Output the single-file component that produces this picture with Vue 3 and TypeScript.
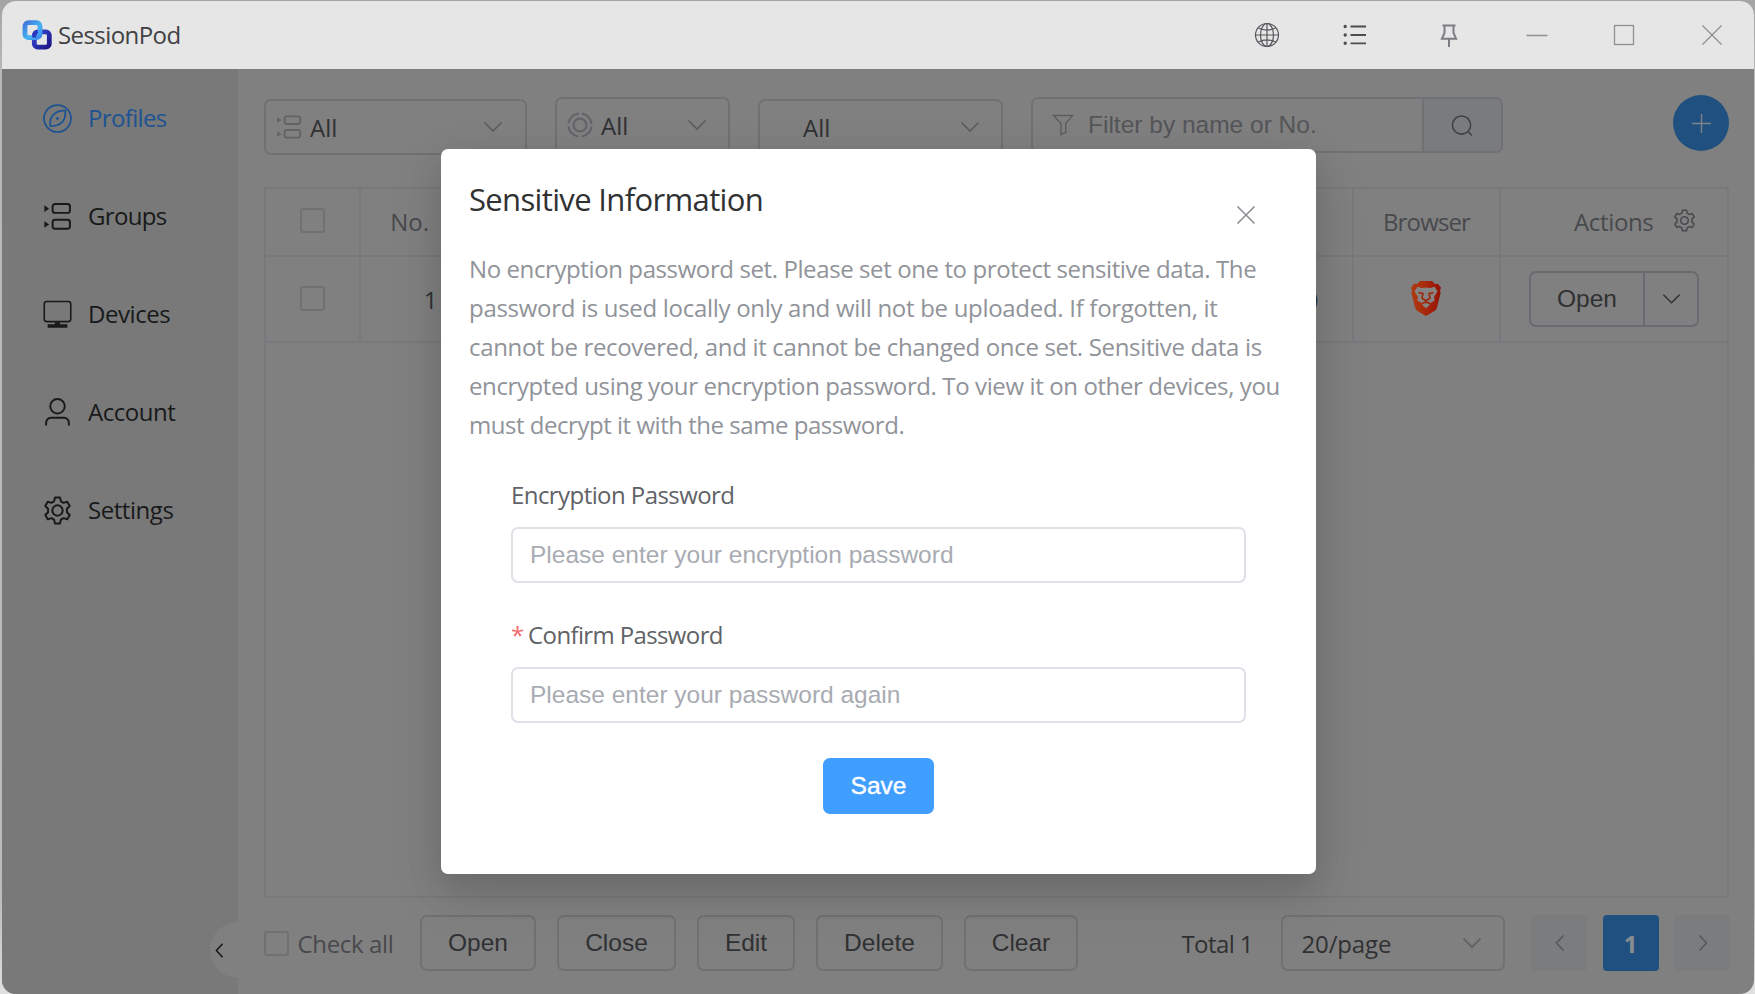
<script setup lang="ts">
import { ref } from 'vue'

interface MenuItem { key: string; label: string }
const menu: MenuItem[] = [
  { key: 'profiles', label: 'Profiles' },
  { key: 'groups', label: 'Groups' },
  { key: 'devices', label: 'Devices' },
  { key: 'account', label: 'Account' },
  { key: 'settings', label: 'Settings' },
]
const active = ref('profiles')

const bulkActions: string[] = ['Open', 'Close', 'Edit', 'Delete', 'Clear']

const notice: string[] = [
  'No encryption password set. Please set one to protect sensitive data. The',
  'password is used locally only and will not be uploaded. If forgotten, it',
  'cannot be recovered, and it cannot be changed once set. Sensitive data is',
  'encrypted using your encryption password. To view it on other devices, you',
  'must decrypt it with the same password.',
]
const password = ref('')
const confirmation = ref('')

const gear =
  'M11.6 1.5h4.8l.9 3.6 2.5 1.5 3.6-1.1 2.4 4.2-2.7 2.6v3.4l2.7 2.6-2.4 4.2-3.6-1.1-2.5 1.5-.9 3.6h-4.8l-.9-3.6-2.5-1.5-3.6 1.1-2.4-4.2 2.7-2.6v-3.4L2.2 9.7l2.4-4.2 3.6 1.1 2.5-1.5z'
</script>

<template>
  <div class="desktop">
    <div class="window">
      <header class="titlebar">
        <svg class="logo" viewBox="0 0 30 30" fill="none">
          <defs>
            <linearGradient id="lg1" x1="0" y1="0" x2="1" y2="1">
              <stop offset="0" stop-color="#3f78dc" /><stop offset=".6" stop-color="#45b4f4" /><stop offset="1" stop-color="#3a8cec" />
            </linearGradient>
            <linearGradient id="lg2" x1="0" y1="0" x2="1" y2="1">
              <stop offset="0" stop-color="#3a4cd8" /><stop offset="1" stop-color="#1c1684" />
            </linearGradient>
          </defs>
          <rect x="12.300" y="11.800" width="15" height="15.400" rx="3.500" stroke="url(#lg2)" stroke-width="4.800" />
          <rect x="3" y="2.700" width="15" height="15" rx="3.500" stroke="url(#lg1)" stroke-width="4.800" />
          <path d="M12.300 17.500v-2.200a3.500 3.500 0 0 1 3.200-3.500" stroke="#2c35bd" stroke-width="4" />
        </svg>
        <span class="brand">SessionPod</span>
        <div class="tools">
          <svg class="tool" viewBox="0 0 28 28" fill="none" stroke="#55565a" stroke-width="1.2">
            <circle cx="14" cy="14" r="11.500" /><ellipse cx="14" cy="14" rx="6.500" ry="11.500" />
            <path d="M14 2.500v23M2.500 14h23M5 6.800q9 4.500 18 0M5 21.200q9-4.500 18 0" />
          </svg>
          <svg class="tool" viewBox="0 0 28 28" fill="none" stroke="#4c4d50" stroke-width="1.800">
            <path d="M9.500 5.500H25M9.500 14H25M9.500 22.300H25" /><path stroke-width="3.400" stroke-linecap="round" d="M4.200 5.500h.01M4.200 14h.01M4.200 22.300h.01" />
          </svg>
          <svg class="tool pin" viewBox="0 0 28 28" fill="none" stroke="#7c7d82" stroke-width="2">
            <path d="M7.500 4.500h13M9.500 4.500v7.500l-2.600 5.700h14.200L18.500 12V4.500M14 17.700v8.300" />
          </svg>
          <svg class="tool" viewBox="0 0 28 28" stroke="#8f9094" stroke-width="1.400"><path d="M3.500 14.500h21" /></svg>
          <svg class="tool max" viewBox="0 0 28 28" fill="none" stroke="#8f9094" stroke-width="1.300"><rect x="4.500" y="4.500" width="19" height="19" /></svg>
          <svg class="tool" viewBox="0 0 28 28" stroke="#8f9094" stroke-width="1.300"><path d="M4.500 4.500l19 19M23.500 4.500l-19 19" /></svg>
        </div>
      </header>

      <div class="body">
        <aside class="sidebar">
          <nav>
            <a v-for="item in menu" :key="item.key" class="item" :class="{ on: item.key === active }" @click="active = item.key">
              <svg class="mico" viewBox="0 0 28 28" fill="none" stroke="currentColor" stroke-width="1.900">
                <template v-if="item.key === 'profiles'">
                  <circle cx="14" cy="14" r="13" stroke-width="1.700" />
                  <path d="M21.500 6.500c.5 5-1 9.500-4 12-2.500 2-6.500 3-10.500 2.700C6.500 17 7.500 13 10 10.500c3-3 7-4.300 11.500-4z" stroke-width="1.700" />
                  <circle cx="14" cy="14" r="1.400" fill="currentColor" stroke="none" />
                </template>
                <template v-else-if="item.key === 'groups'">
                  <rect x="9.300" y="1.900" width="16.700" height="8.600" rx="2.400" /><rect x="9.300" y="17.200" width="16.700" height="8.600" rx="2.400" />
                  <path d="M1.300 3.200v6.400l4.600-3.200zM1.300 18.500v6.400l4.600-3.200z" fill="currentColor" stroke="none" />
                </template>
                <template v-else-if="item.key === 'devices'">
                  <rect x="1.200" y="1.500" width="25.600" height="19.400" rx="2.500" stroke-width="1.500" />
                  <path d="M11.500 21.500h5v2h7v3.200h-19v-3.200h7z" fill="currentColor" stroke="none" />
                </template>
                <template v-else-if="item.key === 'account'">
                  <circle cx="14" cy="8" r="7" /><path d="M3 26.500v-2.700a4.700 4.700 0 0 1 4.700-4.700h12.600a4.700 4.700 0 0 1 4.700 4.700v2.700" />
                </template>
                <template v-else>
                  <path :d="gear" stroke-linejoin="round" /><circle cx="14" cy="14" r="5" />
                </template>
              </svg>
              <span>{{ item.label }}</span>
            </a>
          </nav>
          <button class="collapse" aria-label="Collapse"><svg viewBox="0 0 10 18" fill="none" stroke="#181819" stroke-width="1.700"><path d="M8.500 1.500L1.500 9l7 7.500" /></svg></button>
        </aside>

        <main class="main">
          <div class="filters">
            <div class="select s1">
              <svg class="pre" viewBox="0 0 28 28" fill="none" stroke="#626367" stroke-width="2">
                <rect x="9.300" y="2.500" width="16.700" height="8.300" rx="2.400" /><rect x="9.300" y="17.200" width="16.700" height="8.300" rx="2.400" />
                <path d="M1.300 3.500v6l4.600-3zM1.300 18.500v6l4.600-3z" fill="#626367" stroke="none" />
              </svg>
              <span>All</span>
              <svg class="chev" viewBox="0 0 20 12" fill="none" stroke="#5b5d61" stroke-width="1.600"><path d="M1.500 1.500L10 10l8.500-8.500" /></svg>
            </div>
            <div class="select s2">
              <svg class="pre" viewBox="0 0 28 28" fill="none" stroke="#626367" stroke-width="2.200">
                <circle cx="14" cy="14" r="7" /><circle cx="14" cy="14" r="12.500" stroke-dasharray="16.100 3.530" stroke-dashoffset="-1.760" />
              </svg>
              <span>All</span>
              <svg class="chev" viewBox="0 0 20 12" fill="none" stroke="#5b5d61" stroke-width="1.600"><path d="M1.500 1.500L10 10l8.500-8.500" /></svg>
            </div>
            <div class="select s3">
              <span>All</span>
              <svg class="chev" viewBox="0 0 20 12" fill="none" stroke="#5b5d61" stroke-width="1.600"><path d="M1.500 1.500L10 10l8.500-8.500" /></svg>
            </div>
            <div class="search">
              <div class="query">
                <svg viewBox="0 0 22 22" fill="none" stroke="#5b5d61" stroke-width="1.400"><path d="M1.500 1.500h19l-6.800 8v8.800l-4.700 2.300V9.500z" /></svg>
                <span>Filter by name or No.</span>
              </div>
              <button class="go" aria-label="Search"><svg viewBox="0 0 24 24" fill="none" stroke="#3f4043" stroke-width="1.600"><circle cx="11" cy="11.500" r="9.500" /><path d="M17.800 18.300l4 4" /></svg></button>
            </div>
            <button class="add" aria-label="Add"><svg viewBox="0 0 22 22" stroke="#7d838a" stroke-width="1.500"><path d="M1 11h20M11 1v20" /></svg></button>
          </div>

          <section class="table">
            <div class="row head">
              <div class="c-check"><i class="box"></i></div>
              <div class="c-no">No.</div>
              <div class="c-fill"></div>
              <div class="c-browser">Browser</div>
              <div class="c-actions"><span>Actions</span><svg viewBox="0 0 28 28" fill="none" stroke="#48494d" stroke-width="1.900"><path :d="gear" stroke-linejoin="round" /><circle cx="14" cy="14" r="4.600" /></svg></div>
            </div>
            <div class="row data">
              <div class="c-check"><i class="box"></i></div>
              <div class="c-no">1</div>
              <div class="c-fill">0</div>
              <div class="c-browser">
                <svg class="brave" viewBox="0 0 30 35">
                  <defs><linearGradient id="bg" x1="0" x2="1"><stop offset="0" stop-color="#ac3c12" /><stop offset=".5" stop-color="#a8280c" /><stop offset="1" stop-color="#941206" /></linearGradient></defs>
                  <path fill="url(#bg)" d="M9 0h12l3 3 3-.3 3 4-1 3 .6 2.300-3.600 14.500c-.4 1.500-1.200 2.500-2.500 3.400L15 35l-8.500-5.100C5.200 29 4.400 28 4 26.500L.4 12 1 9.700l-1-3 3-4 3 .3z" />
                  <path fill="#878583" d="M15 6.500l4.500.5 4-1.200 3 4.400-3.500 5.800.7 3.500-4.200 2.600-3-1.500h-3l-3 1.500L6.300 19.500 7 16 3.500 10.200l3-4.400 4 1.200zM11 23.800l4-2.300 4 2.300-4 3.500z" />
                  <path fill="none" stroke="#9c260c" stroke-width="1.600" d="M7.500 11.500l4.500 1.200-1 4.500 4 2.500 4-2.500-1-4.500 4.500-1.200M15 19.500v3" />
                </svg>
              </div>
              <div class="c-actions">
                <div class="split"><span>Open</span><i><svg viewBox="0 0 20 12" fill="none" stroke="#303133" stroke-width="1.600"><path d="M1.500 1.500L10 10l8.500-8.500" /></svg></i></div>
              </div>
            </div>
          </section>

          <footer class="footer">
            <label class="all"><i class="box"></i><span>Check all</span></label>
            <button v-for="a in bulkActions" :key="a" class="btn" :class="a.toLowerCase()">{{ a }}</button>
            <div class="pager">
              <span class="total">Total 1</span>
              <div class="size"><span>20/page</span><svg viewBox="0 0 20 12" fill="none" stroke="#5b5d61" stroke-width="1.600"><path d="M1.500 1.500L10 10l8.500-8.500" /></svg></div>
              <button class="pg"><svg viewBox="0 0 10 18" fill="none" stroke="#55575b" stroke-width="1.600"><path d="M8.500 1.500L1.500 9l7 7.500" /></svg></button>
              <button class="pg cur">1</button>
              <button class="pg"><svg viewBox="0 0 10 18" fill="none" stroke="#55575b" stroke-width="1.600"><path d="M1.500 1.500l7 7.500-7 7.500" /></svg></button>
            </div>
          </footer>
        </main>
      </div>
    </div>

    <div class="dialog" role="dialog">
      <div class="dhead">
        <h2>Sensitive Information</h2>
        <svg viewBox="0 0 20 20" stroke="#8b8d92" stroke-width="1.600"><path d="M1.500 1.500l17 17M18.500 1.500l-17 17" /></svg>
      </div>
      <p class="notice"><span v-for="(line, i) in notice" :key="i" :class="'l' + i">{{ line }}</span></p>
      <form @submit.prevent>
        <label class="first">Encryption Password</label>
        <input v-model="password" type="password" placeholder="Please enter your encryption password" />
        <label class="second"><b>*</b>Confirm Password</label>
        <input v-model="confirmation" type="password" placeholder="Please enter your password again" />
        <button class="save">Save</button>
      </form>
    </div>
  </div>
</template>

<style>
html, body { margin: 0; overflow: hidden; }
</style>

<style scoped>
* { box-sizing: border-box; }
button { border: 0; padding: 0; margin: 0; background: none; font: inherit; color: inherit; }
svg { display: block; flex: none; }
.desktop {
  position: relative; width: 1755px; height: 994px; overflow: hidden; padding: 1px 1px 0 2px;
  background: linear-gradient(#a4a4a4 0, #b8b8b8 70px, #bcbcbc 900px, #e0e0e0 994px); font-family: "Open Sans", "Noto Sans", sans-serif; font-size: 24px; letter-spacing: -0.57px;
}
.window { height: 993px; border-radius: 14px; overflow: hidden; display: flex; flex-direction: column; background: #808080; }
.titlebar { height: 68px; flex: none; background: #e6e6e6; display: flex; align-items: center; padding-left: 20px; }
.logo { width: 30px; height: 30px; }
.brand { margin-left: 6px; color: #404143; line-height: 32px; }
.tools { margin-left: auto; display: flex; align-items: center; padding-right: 28px; }
.tool { width: 28px; height: 28px; margin-left: 60px; }
.tool.pin { margin-left: 66px; }
.tool.max { margin-left: 59px; }

.body { flex: 1; display: flex; min-height: 0; }
.sidebar { width: 236px; background: #797979; display: flex; flex-direction: column; }
.item { height: 98px; display: flex; align-items: center; padding-left: 41px; color: #18191a; letter-spacing: -0.45px; }
.item span { margin: 0 0 1px 16px; line-height: 32px; }
.item.on { color: #1c5392; }
.item:nth-child(-n+2) { letter-spacing: -0.65px; }
.mico { width: 29px; height: 29px; }
.collapse { margin: auto 0 16px auto; width: 28px; height: 56px; background: #808080; border-radius: 28px 0 0 28px; padding-left: 5px; }
.collapse svg { width: 9px; height: 17px; }

.main { flex: 1; display: flex; flex-direction: column; padding: 26px 25px 0 26px; min-width: 0; }
.filters { display: flex; align-items: flex-start; height: 92px; }
.select { height: 56px; border: 2px solid #6f7174; border-radius: 7px; display: flex; align-items: center; color: #303133; letter-spacing: 0; }
.select .chev { width: 20px; height: 12px; margin-left: auto; }
.pre { width: 26px; height: 26px; }
.pre + span { margin-left: 8px; }
.s1 { width: 263px; margin-top: 4px; padding: 0 22px 0 10px; }
.s2 { width: 175px; margin: 2px 0 0 28px; padding: 0 21px 0 10px; }
.s3 { width: 245px; margin: 4px 0 0 28px; padding: 0 21px 0 43px; }
.search { display: flex; width: 472px; height: 56px; margin: 2px 0 0 28px; border: 2px solid #6f7174; border-radius: 7px; overflow: hidden; }
.query { flex: 1; display: flex; align-items: center; padding-left: 19px; color: #545559; font: 24.5px "Liberation Sans", Arial, sans-serif; letter-spacing: 0; }
.query svg { width: 22px; height: 22px; margin-right: 14px; }
.go { width: 79px; background: #7a7b7d; border-left: 2px solid #6f7174; display: grid; place-items: center; }
.go svg { width: 23px; height: 23px; }
.add { width: 56px; height: 56px; margin-left: auto; border-radius: 50%; background: #205080; display: grid; place-items: center; }
.add svg { width: 21px; height: 21px; }

.table { height: 711px; border: 2px solid #78797d; }
.row { display: flex; border-bottom: 2px solid #78797d; }
.row > div { display: flex; align-items: center; }
.head { height: 68px; color: #48494d; }
.head > div { padding-bottom: 2px; }
.data { height: 86px; color: #303133; }
.c-check { width: 95px; border-right: 2px solid #78797d; justify-content: center; }
.box { display: block; width: 25px; height: 25px; border: 2px solid #6f7174; border-radius: 3px; }
.c-check .box { margin: -2px 1px 0 0; }
.c-no { width: 76px; justify-content: flex-end; }
.head .c-no { padding-right: 8px; letter-spacing: 0; }
.c-fill { flex: 1; border-right: 2px solid #78797d; justify-content: flex-end; padding-right: 34px; }
.c-browser { width: 147px; border-right: 2px solid #78797d; justify-content: center; }
.head .c-browser { letter-spacing: -0.85px; }
.brave { width: 30px; height: 35px; margin: -1px 1px 0 0; }
.c-actions { width: 226px; }
.head .c-actions { padding-left: 73px; letter-spacing: -0.350px; }
.head .c-actions svg { width: 23px; height: 23px; margin: -1px 0 0 19.500px; }
.split { margin-left: 28px; display: flex; width: 170px; height: 56px; border: 2px solid #6a6b70; border-radius: 7px; font: 24.5px "Liberation Sans", Arial, sans-serif; letter-spacing: 0; }
.split span { width: 114px; display: grid; place-items: center; border-right: 2px solid #6a6b70; }
.split i { flex: 1; display: grid; place-items: center; }
.split svg { width: 19px; height: 12px; }

.footer { display: flex; align-items: center; height: 56px; margin-top: 17px; }
.all { display: flex; align-items: center; color: #48494d; width: 135px; letter-spacing: -0.35px; }
.all span { margin: 1px 0 0 8.500px; }
.btn { height: 56px; margin-left: 21px; border: 2px solid #6f7174; border-radius: 7px; color: #303133; font: 24.5px "Liberation Sans", Arial, sans-serif; letter-spacing: 0; }
.btn.open { width: 116px; }
.btn.close { width: 119px; }
.btn.edit { width: 98px; }
.btn.delete { width: 127px; }
.btn.clear { width: 114px; }
.pager { margin: 0 -1px 0 auto; display: flex; align-items: center; color: #303133; }
.total { margin-top: 1px; }
.size { width: 224px; height: 56px; margin-left: 27.500px; margin-right: 11px; border: 2px solid #6f7174; border-radius: 7px; display: flex; align-items: center; justify-content: space-between; padding: 0 21px 0 19px; letter-spacing: -0.15px; }
.size span { margin-top: 1px; }
.size svg { width: 20px; height: 12px; }
.pg { width: 56px; height: 56px; margin-left: 15.500px; background: #7b7c7d; border-radius: 4px; display: grid; place-items: center; }
.pg svg { width: 10px; height: 18px; margin-left: 1px; }
.pg.cur { background: #205080; color: #8a8d90; font-weight: 700; }

.dialog {
  position: absolute; left: 441px; top: 149px; width: 875px; height: 725px; background: #fff; border-radius: 7px;
  box-shadow: 0 21px 56px 7px rgba(0, 0, 0, .07), 0 14px 35px rgba(0, 0, 0, .13); padding: 28px 28px 0 28px;
}
.dhead { display: flex; justify-content: space-between; height: 72px; }
h2 { margin: 0; font-size: 31px; line-height: 45px; font-weight: 400; color: #303133; letter-spacing: -0.65px; white-space: nowrap; }
.dhead svg { width: 20px; height: 20px; margin: 28px 32px 0 0; }
.notice { margin: 0; color: #909399; }
.notice span { display: block; line-height: 39px; white-space: nowrap; }
.notice .l0 { letter-spacing: -0.400px; }
.notice .l1 { letter-spacing: -0.300px; }
.notice .l2 { letter-spacing: -0.340px; }
.notice .l3 { letter-spacing: -0.390px; }
.notice .l4 { letter-spacing: -0.470px; }
form { margin: 0 42px; display: flex; flex-direction: column; }
label { color: #606266; line-height: 38px; }
label.first { margin-top: 32px; }
label.second { margin-top: 33px; letter-spacing: -0.63px; }
label b { color: #f56c6c; font-weight: 400; margin-right: 4.500px; }
input { width: 735px; height: 56px; margin: 13px 0 0; padding: 0 17px; border: 2px solid #dfe1e8; border-radius: 7px; outline: 0; background: #fff; font: 24.5px "Liberation Sans", Arial, sans-serif; letter-spacing: 0; color: #606266; }
input::placeholder { color: #a8abb2; opacity: 1; }
.save { align-self: center; margin-top: 35px; width: 111px; height: 56px; border-radius: 7px; background: #409eff; color: #fff; font: 24.5px "Liberation Sans", Arial, sans-serif; letter-spacing: 0; -webkit-text-stroke: .4px #fff; }
</style>
